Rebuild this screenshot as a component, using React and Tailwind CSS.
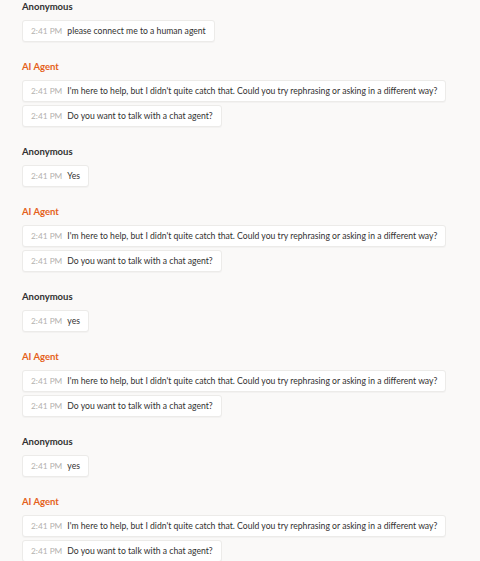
const TIME = "2:41 PM";
const RETRY = "I'm here to help, but I didn't quite catch that. Could you try rephrasing or asking in a different way?";
const OFFER = "Do you want to talk with a chat agent?";

const GROUPS = [
  { from: "user", messages: ["please connect me to a human agent"] },
  { from: "agent", messages: [RETRY, OFFER] },
  { from: "user", messages: ["Yes"] },
  { from: "agent", messages: [RETRY, OFFER] },
  { from: "user", messages: ["yes"] },
  { from: "agent", messages: [RETRY, OFFER] },
  { from: "user", messages: ["yes"] },
  { from: "agent", messages: [RETRY, OFFER] },
];

function Bubble({ text }) {
  return (
    <div className="flex items-center gap-[5px] self-start h-[22px] px-2 rounded-[3px] bg-white border border-[#ecebe9] shadow-[0_1px_1px_rgba(0,0,0,0.03)] whitespace-nowrap">
      <span className="text-[8.3px] text-[#b3b1ae]">{TIME}</span>
      <span className="text-[8.65px] text-[#323130]">{text}</span>
    </div>
  );
}

export default function App() {
  return (
    <div
      className="w-[480px] h-[561px] overflow-hidden bg-[#faf9f8] px-[22px] flex flex-col gap-[18px] text-[10px] leading-[14px]"
      style={{ fontFamily: 'Lato, "Noto Sans", sans-serif' }}
    >
      {GROUPS.map((g, i) => (
        <div key={i} className="flex flex-col">
          <div
            className={
              "font-bold text-[9.5px] h-[14px] mb-[6px] " +
              (g.from === "agent" ? "text-[#e5611b]" : "text-[#323130]")
            }
          >
            {g.from === "agent" ? "AI Agent" : "Anonymous"}
          </div>
          <div className="flex flex-col gap-[3px]">
            {g.messages.map((m, j) => (
              <Bubble key={j} text={m} />
            ))}
          </div>
        </div>
      ))}
    </div>
  );
}
